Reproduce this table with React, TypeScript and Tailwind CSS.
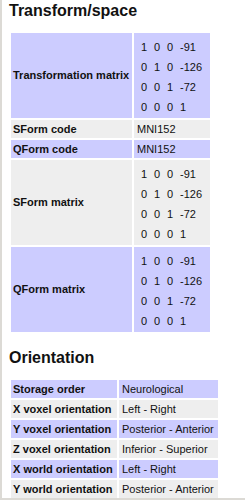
const transform = [
  ['1', '0', '0', '-91'],
  ['0', '1', '0', '-126'],
  ['0', '0', '1', '-72'],
  ['0', '0', '0', '1'],
];

const orientation: [string, string][] = [
  ['Storage order', 'Neurological'],
  ['X voxel orientation', 'Left - Right'],
  ['Y voxel orientation', 'Posterior - Anterior'],
  ['Z voxel orientation', 'Inferior - Superior'],
  ['X world orientation', 'Left - Right'],
  ['Y world orientation', 'Posterior - Anterior'],
];

function Matrix({ rows }: { rows: string[][] }) {
  return (
    <div className="grid grid-cols-[13px_13px_13px_auto] pl-[7px] pt-[3px] leading-[20px]">
      {rows.flat().map((value, i) => (
        <span key={i}>{value}</span>
      ))}
    </div>
  );
}

export default function App() {
  const lavender = 'bg-[#ccccff]';
  const grey = 'bg-[#eeeeee]';

  return (
    <div
      className="box-border h-[500px] overflow-hidden border-b-2 border-l-2 border-[#dcdad5] bg-white text-[11px] text-[#111111]"
      style={{ fontFamily: '"Liberation Sans", Arial, sans-serif' }}
    >
      <h2 className="pl-[7px] pt-[1px] text-[16px] font-bold leading-[20px]">Transform/space</h2>

      <table className="ml-[7px] mt-[10px] border-separate border-spacing-[2px]">
        <tbody>
          <tr>
            <td className={`${lavender} h-[85px] w-[121px] px-[2px] align-middle font-bold`}>Transformation matrix</td>
            <td className={`${lavender} w-[76px] p-0 align-middle`}>
              <Matrix rows={transform} />
            </td>
          </tr>
          <tr>
            <td className={`${grey} h-[18px] px-[2px] font-bold`}>SForm code</td>
            <td className={`${grey} px-[3px]`}>MNI152</td>
          </tr>
          <tr>
            <td className={`${lavender} h-[18px] px-[2px] font-bold`}>QForm code</td>
            <td className={`${lavender} px-[3px]`}>MNI152</td>
          </tr>
          <tr>
            <td className={`${grey} h-[85px] px-[2px] font-bold`}>SForm matrix</td>
            <td className={`${grey} p-0`}>
              <Matrix rows={transform} />
            </td>
          </tr>
          <tr>
            <td className={`${lavender} h-[85px] px-[2px] font-bold`}>QForm matrix</td>
            <td className={`${lavender} p-0`}>
              <Matrix rows={transform} />
            </td>
          </tr>
        </tbody>
      </table>

      <h2 className="mt-[14px] pl-[7px] text-[16px] font-bold leading-[20px]">Orientation</h2>

      <table className="ml-[7px] mt-[10px] border-separate border-spacing-[2px]">
        <tbody>
          {orientation.map(([label, value], i) => (
            <tr key={label}>
              <td className={`${i % 2 === 0 ? lavender : grey} h-[18px] w-[106px] whitespace-nowrap px-[2px] font-bold`}>{label}</td>
              <td className={`${i % 2 === 0 ? lavender : grey} w-[99px] whitespace-nowrap px-[3px]`}>{value}</td>
            </tr>
          ))}
        </tbody>
      </table>
    </div>
  );
}
